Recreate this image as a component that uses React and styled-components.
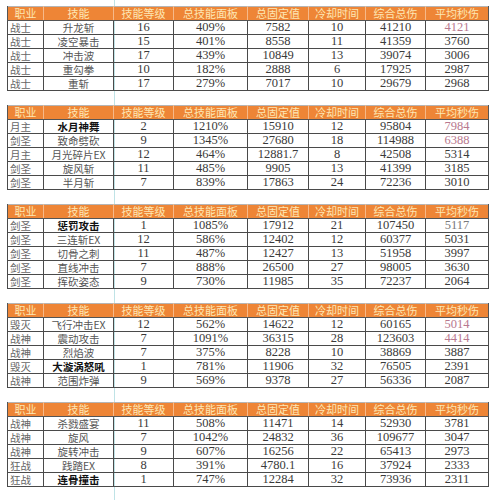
import React from "react";
import styled, { createGlobalStyle } from "styled-components";

const GlobalStyle = createGlobalStyle`
  html, body {
    margin: 0;
    padding: 0;
    background: #fff;
  }
  body {
    font-family: "Liberation Serif", "Noto Sans CJK SC", serif;
  }
`;

const Page = styled.div`
  width: 492px;
  height: 500px;
  overflow: hidden;
  box-sizing: border-box;
  padding: 6px 0 0 7px;
  display: flex;
  flex-direction: column;
  gap: 14px;
  background-image: linear-gradient(to right, transparent 114px, #bfe3e6 114px, #bfe3e6 115px, transparent 115px);
`;

const Table = styled.table`
  width: 481px;
  border-collapse: collapse;
  table-layout: fixed;
  border-top: 1px solid #b5b5b5;
`;

const HeadCell = styled.th`
  height: 13px;
  padding: 0;
  background: #ee8536;
  color: #fde7b4;
  font-family: "Noto Sans CJK SC", sans-serif;
  font-size: 11px;
  font-weight: 400;
  line-height: 13px;
  text-align: center;
  border-left: 1px solid #f6b989;
  border-bottom: 1px solid #555;
  &:first-child { border-left: 1px solid #555; }
  &:last-child { border-right: 1px solid #555; }
`;

const Cell = styled.td`
  height: 13px;
  padding: 0;
  line-height: 13px;
  text-align: ${(p) => (p.$left ? "left" : "center")};
  padding-left: ${(p) => (p.$left ? "2px" : "0")};
  color: ${(p) => p.$color || "#3a3a3a"};
  font-weight: ${(p) => (p.$bold ? 700 : 400)};
  font-family: ${(p) => (p.$cjk ? '"Noto Sans CJK SC", sans-serif' : '"Liberation Serif", serif')};
  font-size: ${(p) => (p.$cjk ? "10.5px" : "12.5px")};
  border: 1px solid #4a4a4a;
  white-space: nowrap;
  overflow: hidden;
`;

const widths = [36, 70, 60, 74, 61, 57, 60, 63];
const headers = ["职业", "技能", "技能等级", "总技能面板", "总固定值", "冷却时间", "综合总伤", "平均秒伤"];

const tables = [
  [
    ["战士", "升龙斩", 16, "409%", "7582", 10, 41210, 4121, 0, 1],
    ["战士", "凌空暴击", 15, "401%", "8558", 11, 41359, 3760],
    ["战士", "冲击波", 17, "439%", "10849", 13, 39074, 3006],
    ["战士", "重勾拳", 10, "182%", "2888", 6, 17925, 2987],
    ["战士", "重斩", 17, "279%", "7017", 10, 29679, 2968],
  ],
  [
    ["月主", "水月神舞", 2, "1210%", "15910", 12, 95804, 7984, 1, 1],
    ["剑圣", "致命劈砍", 9, "1345%", "27680", 18, 114988, 6388, 0, 1],
    ["月主", "月光碎片EX", 12, "464%", "12881.7", 8, 42508, 5314],
    ["剑圣", "旋风斩", 11, "485%", "9905", 13, 41399, 3185],
    ["剑圣", "半月斩", 7, "839%", "17863", 24, 72236, 3010],
  ],
  [
    ["剑圣", "惩罚攻击", 1, "1085%", "17912", 21, 107450, 5117, 1, 2],
    ["剑圣", "三连斩EX", 12, "586%", "12402", 12, 60377, 5031],
    ["剑圣", "切骨之刺", 11, "487%", "12427", 13, 51958, 3997],
    ["剑圣", "直线冲击", 7, "888%", "26500", 27, 98005, 3630],
    ["剑圣", "挥砍姿态", 9, "730%", "11985", 35, 72237, 2064],
  ],
  [
    ["毁灭", "飞行冲击EX", 12, "562%", "14622", 12, 60165, 5014, 0, 1],
    ["战神", "震动攻击", 7, "1091%", "36315", 28, 123603, 4414, 0, 1],
    ["战神", "烈焰波", 7, "375%", "8228", 10, 38869, 3887],
    ["毁灭", "大漩涡怒吼", 1, "781%", "11906", 32, 76505, 2391, 1],
    ["战神", "范围炸弹", 9, "569%", "9378", 27, 56336, 2087],
  ],
  [
    ["战神", "杀戮盛宴", 11, "508%", "11471", 14, 52930, 3781],
    ["战神", "旋风", 7, "1042%", "24832", 36, 109677, 3047],
    ["战神", "旋转冲击", 9, "607%", "16256", 22, 65413, 2973],
    ["狂战", "践踏EX", 8, "391%", "4780.1", 16, 37924, 2333],
    ["狂战", "连骨撞击", 1, "747%", "12284", 32, 73936, 2311, 1],
  ],
];

const lastColor = (mark) => (mark === 1 ? "#b8788e" : mark === 2 ? "#7a7a7a" : "#3a3a3a");

function SkillTable({ rows }) {
  return (
    <Table>
      <colgroup>
        {widths.map((w, i) => (
          <col key={i} style={{ width: w }} />
        ))}
      </colgroup>
      <thead>
        <tr>
          {headers.map((h) => (
            <HeadCell key={h}>{h}</HeadCell>
          ))}
        </tr>
      </thead>
      <tbody>
        {rows.map((r, i) => (
          <tr key={i}>
            <Cell $left $cjk $color="#666">{r[0]}</Cell>
            <Cell $cjk $bold={r[8] === 1} $color={r[8] === 1 ? "#111" : "#555"}>{r[1]}</Cell>
            <Cell>{r[2]}</Cell>
            <Cell>{r[3]}</Cell>
            <Cell>{r[4]}</Cell>
            <Cell>{r[5]}</Cell>
            <Cell>{r[6]}</Cell>
            <Cell $color={lastColor(r[9])}>{r[7]}</Cell>
          </tr>
        ))}
      </tbody>
    </Table>
  );
}

export default function App() {
  return (
    <>
      <GlobalStyle />
      <Page>
        {tables.map((rows, i) => (
          <SkillTable key={i} rows={rows} />
        ))}
      </Page>
    </>
  );
}
